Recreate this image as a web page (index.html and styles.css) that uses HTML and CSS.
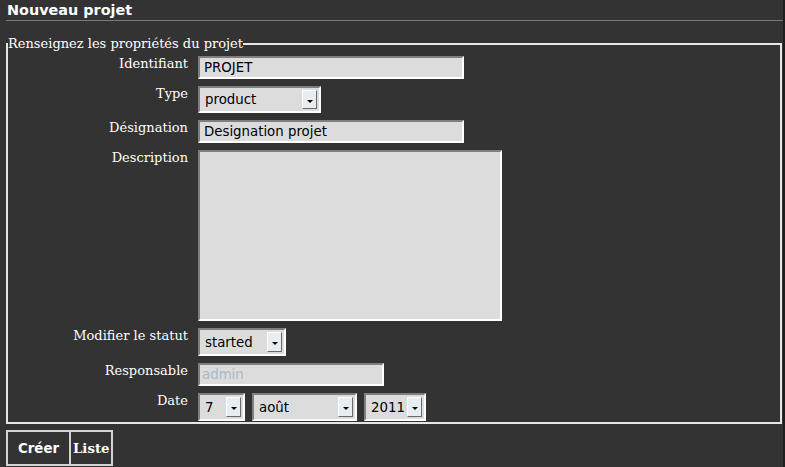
FILE: index.html
```html
<!DOCTYPE html>
<html lang="fr">
<head>
<meta charset="utf-8">
<title>Nouveau projet</title>
<link rel="stylesheet" href="styles.css">
</head>
<body>
<div class="page">
  <h1 class="title">Nouveau projet</h1>
  <form class="form">
    <fieldset class="box">
      <legend class="legend">Renseignez les propriétés du projet</legend>
      <div class="grid">
        <label class="lbl">Identifiant</label>
        <div class="ctl"><input class="txt w-long" type="text" value="PROJET"></div>

        <label class="lbl">Type</label>
        <div class="ctl"><span class="sel w-type"><select class="sel-in"><option>product</option></select><span class="arrow"></span></span></div>

        <label class="lbl">Désignation</label>
        <div class="ctl"><input class="txt w-long" type="text" value="Designation projet"></div>

        <label class="lbl">Description</label>
        <div class="ctl"><textarea class="area"></textarea></div>

        <label class="lbl">Modifier le statut</label>
        <div class="ctl"><span class="sel w-statut"><select class="sel-in"><option>started</option></select><span class="arrow"></span></span></div>

        <label class="lbl">Responsable</label>
        <div class="ctl"><input class="txt w-resp dis" type="text" value="admin" disabled></div>

        <label class="lbl">Date</label>
        <div class="ctl row">
          <span class="sel w-day"><select class="sel-in"><option>7</option></select><span class="arrow"></span></span>
          <span class="sel w-month"><select class="sel-in"><option>août</option></select><span class="arrow"></span></span>
          <span class="sel w-year"><select class="sel-in"><option>2011</option></select><span class="arrow"></span></span>
        </div>
      </div>
    </fieldset>
    <div class="actions">
      <button type="button" class="btn btn-create">Créer</button>
      <button type="button" class="btn btn-list">Liste</button>
    </div>
  </form>
</div>
</body>
</html>
```

FILE: styles.css
```css
html {
  background: #1e1e1e;
  height: 100%;
}
body {
  margin: 0;
  width: 783px;
  min-height: 467px;
  background: #333333;
  color: #ffffff;
  font-family: "DejaVu Serif", serif;
  font-size: 13px;
}
.page {
  padding: 0;
}
.title {
  margin: 0 0 0 6px;
  padding: 3px 0 2px 1px;
  font-family: "DejaVu Sans", sans-serif;
  font-weight: bold;
  font-size: 14.4px;
  line-height: 15px;
  border-bottom: 1px solid #7a7a7a;
}
.form {
  margin: 15px 0 0 0;
}
.box {
  margin: 0 1px 0 6px;
  padding: 0 0 1px 0;
  border: 2px solid #e6e6e6;
  min-width: 0;
}
.legend {
  padding: 0;
  font-family: "DejaVu Serif", serif;
  font-size: 13px;
}
.grid {
  display: grid;
  grid-template-columns: 180px auto;
  column-gap: 10px;
  row-gap: 7px;
  padding-top: 5px;
  align-items: start;
}
.lbl {
  text-align: right;
  font-size: 13px;
  line-height: 15px;
  padding-top: 0;
}
.ctl {
  display: flex;
}
.row {
  gap: 7px;
}
.txt {
  box-sizing: border-box;
  height: 23px;
  margin: 0;
  padding: 0 4px;
  border: 2px solid;
  border-color: #7f7f7f #ffffff #ffffff #7f7f7f;
  background: #dcdcdc;
  color: #000;
  font-family: "DejaVu Sans", sans-serif;
  font-size: 13.33px;
  outline: none;
}
.w-long { width: 266px; }
.w-resp { width: 186px; }
.dis { color: #a9b9c7; padding-left: 2px; }
.area {
  box-sizing: border-box;
  width: 304px;
  height: 171px;
  margin: 0;
  border: 2px solid;
  border-color: #7f7f7f #ffffff #ffffff #7f7f7f;
  background: #dcdcdc;
  resize: none;
}
.sel {
  box-sizing: border-box;
  display: inline-flex;
  align-items: center;
  height: 28px;
  padding: 2px;
  border: 2px solid;
  border-color: #7f7f7f #ffffff #ffffff #7f7f7f;
  background: #dcdcdc;
}
.sel-in {
  flex: 1;
  min-width: 0;
  appearance: none;
  -webkit-appearance: none;
  border: none;
  background: transparent;
  color: #000;
  padding: 0 0 0 3px;
  margin: 0;
  font-family: "DejaVu Sans", sans-serif;
  font-size: 13.33px;
  outline: none;
}
.arrow {
  box-sizing: border-box;
  flex: none;
  width: 15px;
  height: 100%;
  border: 1px solid;
  border-color: #ffffff #6a6a6a #6a6a6a #ffffff;
  background: #e8edf2;
  display: flex;
  align-items: center;
  justify-content: center;
  padding-top: 3px;
}
.arrow::after {
  content: "";
  width: 0;
  height: 0;
  border-left: 3px solid transparent;
  border-right: 3px solid transparent;
  border-top: 3px solid #000;
}
.w-type { width: 123px; height: 27px; }
.w-statut { width: 88px; }
.w-day { width: 47px; }
.w-month { width: 105px; }
.w-year { width: 62px; }
.actions {
  display: flex;
  margin: 6px 0 0 6px;
}
.btn {
  height: 36px;
  margin: 0;
  border: 2px solid #d4d4d4;
  background: #333333;
  color: #ffffff;
  font-weight: bold;
  font-size: 13.33px;
}
.btn-create {
  width: 65px;
  font-family: "DejaVu Sans", sans-serif;
}
.btn-list {
  width: 44px;
  margin-left: -2px;
  padding: 0 2px;
  font-family: "DejaVu Serif", serif;
}
```
